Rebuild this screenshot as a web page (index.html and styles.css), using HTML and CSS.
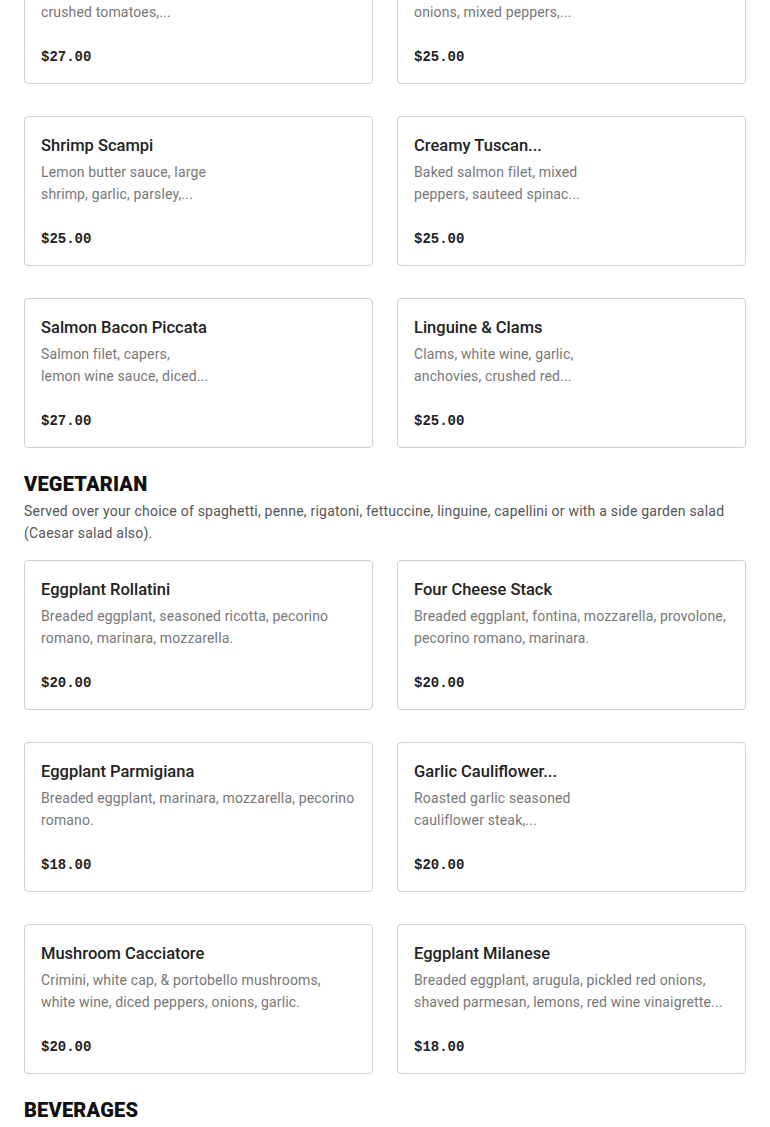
FILE: index.html
```html
<!DOCTYPE html>
<html lang="en">
<head>
<meta charset="utf-8">
<title>Menu</title>
<link rel="stylesheet" href="styles.css">
</head>
<body>
<main class="menu">
  <section class="section first">
    <div class="grid">
      <article class="card">
        <h3 class="title">Chicken Parmigiana</h3>
        <p class="desc">Breaded chicken, marinara,<br>crushed tomatoes,...</p>
        <p class="price">$27.00</p>
      </article>
      <article class="card">
        <h3 class="title">Sausage &amp; Peppers</h3>
        <p class="desc">Italian sausage, sauteed<br>onions, mixed peppers,...</p>
        <p class="price">$25.00</p>
      </article>
      <article class="card">
        <h3 class="title">Shrimp Scampi</h3>
        <p class="desc">Lemon butter sauce, large<br>shrimp, garlic, parsley,...</p>
        <p class="price">$25.00</p>
      </article>
      <article class="card">
        <h3 class="title">Creamy Tuscan...</h3>
        <p class="desc">Baked salmon filet, mixed<br>peppers, sauteed spinac...</p>
        <p class="price">$25.00</p>
      </article>
      <article class="card">
        <h3 class="title">Salmon Bacon Piccata</h3>
        <p class="desc">Salmon filet, capers,<br>lemon wine sauce, diced...</p>
        <p class="price">$27.00</p>
      </article>
      <article class="card">
        <h3 class="title">Linguine &amp; Clams</h3>
        <p class="desc">Clams, white wine, garlic,<br>anchovies, crushed red...</p>
        <p class="price">$25.00</p>
      </article>
    </div>
  </section>

  <section class="section">
    <h2 class="heading">VEGETARIAN</h2>
    <p class="intro">Served over your choice of spaghetti, penne, rigatoni, fettuccine, linguine, capellini or with a side garden salad (Caesar salad also).</p>
    <div class="grid">
      <article class="card">
        <h3 class="title">Eggplant Rollatini</h3>
        <p class="desc">Breaded eggplant, seasoned ricotta, pecorino<br>romano, marinara, mozzarella.</p>
        <p class="price">$20.00</p>
      </article>
      <article class="card">
        <h3 class="title">Four Cheese Stack</h3>
        <p class="desc">Breaded eggplant, fontina, mozzarella, provolone,<br>pecorino romano, marinara.</p>
        <p class="price">$20.00</p>
      </article>
      <article class="card">
        <h3 class="title">Eggplant Parmigiana</h3>
        <p class="desc">Breaded eggplant, marinara, mozzarella, pecorino<br>romano.</p>
        <p class="price">$18.00</p>
      </article>
      <article class="card">
        <h3 class="title">Garlic Cauliflower...</h3>
        <p class="desc">Roasted garlic seasoned<br>cauliflower steak,...</p>
        <p class="price">$20.00</p>
      </article>
      <article class="card">
        <h3 class="title">Mushroom Cacciatore</h3>
        <p class="desc">Crimini, white cap, &amp; portobello mushrooms,<br>white wine, diced peppers, onions, garlic.</p>
        <p class="price">$20.00</p>
      </article>
      <article class="card">
        <h3 class="title">Eggplant Milanese</h3>
        <p class="desc">Breaded eggplant, arugula, pickled red onions,<br>shaved parmesan, lemons, red wine vinaigrette...</p>
        <p class="price">$18.00</p>
      </article>
    </div>
  </section>

  <section class="section">
    <h2 class="heading">BEVERAGES</h2>
  </section>
</main>
</body>
</html>
```

FILE: styles.css
```css
* { box-sizing: border-box; }
html, body { margin: 0; padding: 0; background: #fff; }
body { font-family: "Roboto", "Liberation Sans", sans-serif; color: #222; overflow: hidden; }
.menu { padding: 0 24px; }
.section { margin-top: 24px; }
.section.first { margin-top: -66px; }
.heading {
  margin: 0 0 4px;
  font-size: 20px;
  line-height: 24px;
  font-weight: 900;
  color: #111;
  letter-spacing: 0.2px;
}
.intro {
  margin: 0 0 16px;
  font-size: 14px;
  line-height: 22px;
  color: #555;
  letter-spacing: 0.22px;
}
.grid {
  display: grid;
  grid-template-columns: 1fr 1fr;
  column-gap: 24px;
  row-gap: 32px;
}
.card {
  height: 150px;
  border: 1px solid #d0d0d0;
  border-radius: 4px;
  padding: 16px;
}
.title {
  margin: 0;
  font-size: 16.5px;
  line-height: 25px;
  font-weight: 500;
  color: #222;
  white-space: nowrap;
}
.desc {
  margin: 3px 0 0;
  height: 44px;
  font-size: 14px;
  line-height: 22px;
  color: #777;
  letter-spacing: 0.15px;
  white-space: nowrap;
  overflow: hidden;
}
.price {
  margin: 23px 0 0;
  font-family: "Liberation Mono", monospace;
  font-weight: 700;
  font-size: 14px;
  line-height: 22px;
  color: #222;
}
```
